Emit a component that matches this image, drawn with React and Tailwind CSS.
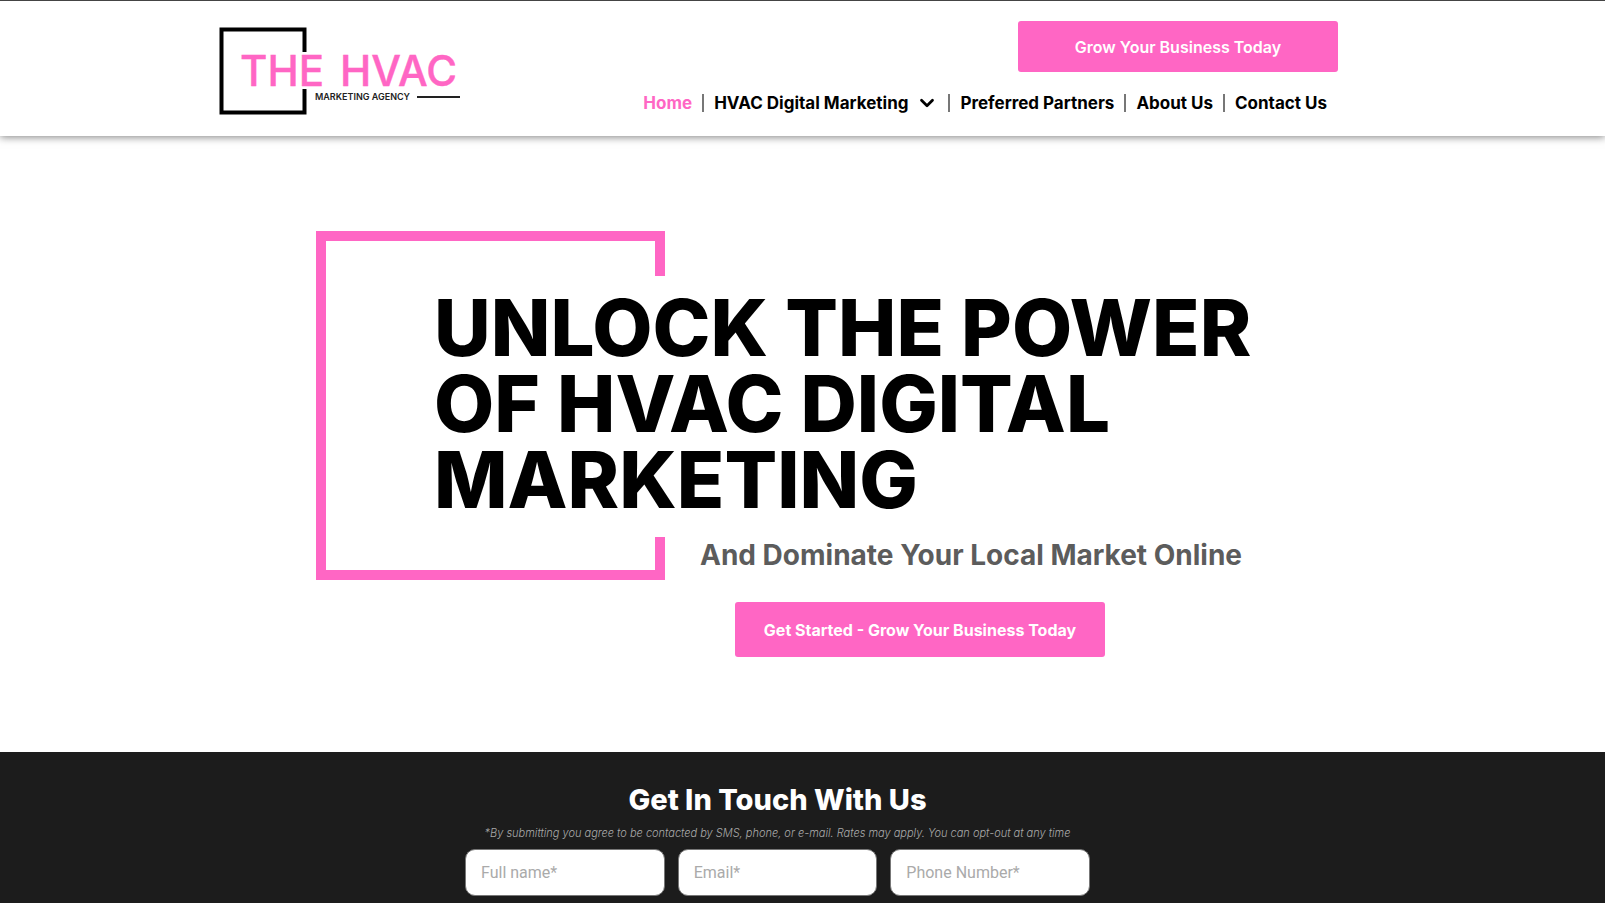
import { ChevronDown } from "lucide-react";

const links = [
  { label: "Home", active: true },
  { label: "HVAC Digital Marketing", menu: true },
  { label: "Preferred Partners" },
  { label: "About Us" },
  { label: "Contact Us" },
];

const fields = [
  { id: "name", label: "Full name*", type: "text" },
  { id: "email", label: "Email*", type: "email" },
  { id: "phone", label: "Phone Number*", type: "tel" },
];

function Logo() {
  return (
    <a href="#" aria-label="The HVAC Marketing Agency">
      <svg width="242" height="88" viewBox="0 0 242 88" className="font-['Inter',sans-serif]">
        <path d="M85.5 25V2.5H2.5V85.5H85.5V62" fill="none" stroke="#000" strokeWidth="4" />
        <text x="21" y="59" fontSize="42" fontWeight="500" fill="#ff66c4" stroke="#ff66c4" strokeWidth="0.4">THE</text>
        <text x="121" y="59" fontSize="42" fontWeight="500" fill="#ff66c4" stroke="#ff66c4" strokeWidth="0.4">HVAC</text>
        <text x="96" y="73" fontSize="9" fontWeight="600" fill="#222">MARKETING AGENCY</text>
        <path d="M198 70H241" stroke="#222" strokeWidth="2" />
      </svg>
    </a>
  );
}

function Header() {
  return (
    <header className="relative border-t border-[#444] bg-white pr-12 shadow-[0_1px_8px_rgba(0,0,0,0.5)]">
      <div className="mx-auto flex max-w-[1119px] items-start justify-between pt-5 pb-5">
        <div className="pt-[6px]">
          <Logo />
        </div>
        <div className="flex flex-col items-end gap-[18px]">
          <button className="h-[51px] w-80 rounded-[3px] bg-[#ff66c4] text-base font-semibold text-white">
            Grow Your Business Today
          </button>
          <nav className="flex items-center pr-[11px] text-[17px] leading-[26px] font-bold text-black">
            {links.map((l, i) => (
              <div key={l.label} className="flex items-center">
                {i > 0 && <span className="mx-[10px] h-[18px] w-[2px] bg-[#777]" />}
                <a href="#" className={l.active ? "flex items-center text-[#ff66c4]" : "flex items-center"}>
                  {l.label}
                  {l.menu && <ChevronDown className="ml-2 size-[22px]" strokeWidth={3} />}
                </a>
              </div>
            ))}
          </nav>
        </div>
      </div>
    </header>
  );
}

function Hero() {
  return (
    <section className="bg-white pt-[95px] pr-12 pb-[95px]">
      <div className="mx-auto grid max-w-[925px]">
        <svg width="349" height="349" viewBox="0 0 349 349" className="col-start-1 row-start-1" aria-hidden="true">
          <path d="M344 45V5H5V344H344V306" fill="none" stroke="#ff66c4" strokeWidth="10" />
        </svg>
        <div className="relative col-start-1 row-start-1 flex flex-col pt-[59px]">
          <h1 className="pl-[118px] text-[78px] leading-[76px] font-extrabold whitespace-nowrap text-black">
            UNLOCK THE POWER
            <br />
            OF HVAC DIGITAL
            <br />
            MARKETING
          </h1>
          <p className="pt-[19px] pl-[384px] text-[28px] leading-9 font-bold whitespace-nowrap text-[#5c5c5c]">
            And Dominate Your Local Market Online
          </p>
          <button className="mt-[29px] ml-[419px] h-[55px] w-[370px] rounded-[3px] bg-[#ff66c4] text-base font-bold text-white">
            Get Started - Grow Your Business Today
          </button>
        </div>
      </div>
    </section>
  );
}

function Contact() {
  return (
    <section className="bg-[#1c1c1c] pt-8 pr-[50px] pb-8">
      <form className="mx-auto max-w-[625px] text-center">
        <h2 className="text-[29px] leading-8 font-extrabold text-white">Get In Touch With Us</h2>
        <p className="pt-[9px] pb-2 text-[11px] leading-4 font-light text-[#aaa] italic">
          *By submitting you agree to be contacted by SMS, phone, or e-mail. Rates may apply. You can opt-out at any time
        </p>
        <div className="grid grid-cols-3 gap-[13px]">
          {fields.map((f) => (
            <input
              key={f.id}
              id={f.id}
              type={f.type}
              aria-label={f.label}
              placeholder={f.label}
              className="h-[47px] w-full min-w-0 rounded-[10px] border border-[#777] bg-white px-[15px] font-['Roboto',sans-serif] text-base text-black placeholder:text-[#aaa]"
            />
          ))}
        </div>
      </form>
    </section>
  );
}

export default function App() {
  return (
    <div className="h-screen overflow-hidden bg-[#1c1c1c] font-['Inter',sans-serif]">
      <Header />
      <Hero />
      <Contact />
    </div>
  );
}
